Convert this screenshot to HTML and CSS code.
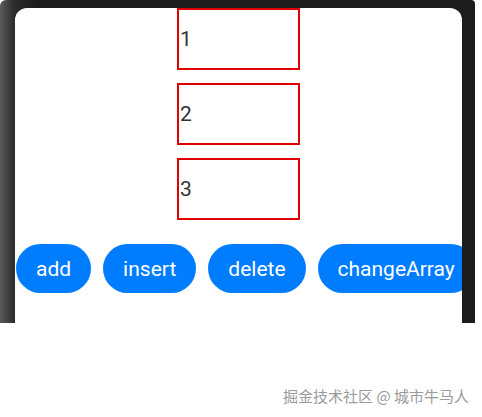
FILE: index.html
```html
<!DOCTYPE html>
<html>
  <head>
    <meta charset="UTF-8" />
    <title>ForEach Demo</title>
    <link rel="stylesheet" href="styles.css">
  </head>
  <body>
    <div class="device">
      <div class="screen">
        <div class="list">
          <div class="item">1</div>
          <div class="item">2</div>
          <div class="item">3</div>
        </div>

        <div class="actions">
          <button class="action-button">add</button>
          <button class="action-button">insert</button>
          <button class="action-button">delete</button>
          <button class="action-button">changeArray</button>
        </div>
      </div>
    </div>

    <div class="watermark">掘金技术社区 @ 城市牛马人</div>
  </body>
</html>
```

FILE: styles.css
```css
* {
  box-sizing: border-box;
  margin: 0;
  padding: 0;
}

body {
  background: #ffffff;
  font-family: Roboto, "Noto Sans", Arial, sans-serif;
  width: 482px;
  height: 417px;
  overflow: hidden;
}

.device {
  width: 475px;
  height: 323px;
  padding: 8px 13px 0 15px;
  background: linear-gradient(90deg, #5a5a5a 0%, #2c2c2c 3%, #1c1c1c 8%, #1c1c1c 100%);
  border-radius: 6px 4px 0 0;
  display: flex;
}

.screen {
  flex: 1;
  background: #ffffff;
  border-radius: 12px 12px 0 0;
  overflow: hidden;
  display: flex;
  flex-direction: column;
}

.list {
  display: flex;
  flex-direction: column;
  align-items: center;
  gap: 13px;
}

.item {
  width: 123px;
  height: 62px;
  border: 2px solid #e00000;
  color: #333333;
  font-size: 21px;
  display: flex;
  align-items: center;
  padding-left: 1px;
}

.actions {
  display: flex;
  gap: 12px;
  margin-top: 24px;
  padding-left: 1px;
}

.action-button {
  flex-shrink: 0;
  height: 49px;
  padding: 0 20px;
  background: #007dff;
  color: #ffffff;
  border: none;
  border-radius: 25px;
  font-family: Roboto, "Noto Sans", Arial, sans-serif;
  font-size: 21px;
}

.watermark {
  margin-top: 63px;
  padding-right: 13px;
  text-align: right;
  color: #9a9a9a;
  font-family: "Noto Sans CJK SC", sans-serif;
  font-size: 15px;
  line-height: 20px;
}
```
